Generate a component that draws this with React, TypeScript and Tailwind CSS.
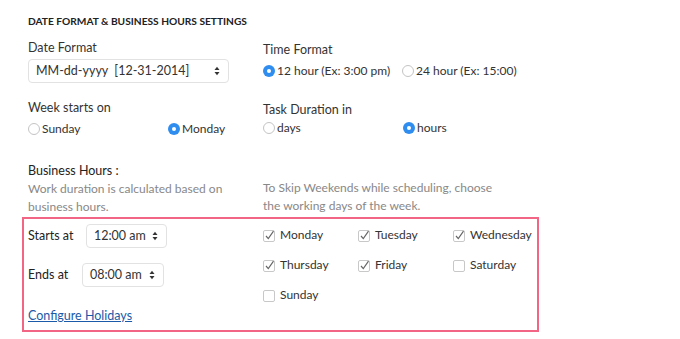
import React from "react";

const font = { fontFamily: "Lato, 'Open Sans', sans-serif" };

function Radio({ checked }: { checked?: boolean }) {
  return checked ? (
    <span className="inline-flex items-center justify-center w-[12px] h-[12px] rounded-full bg-[#2f8df0] shrink-0">
      <span className="w-[4px] h-[4px] rounded-full bg-white" />
    </span>
  ) : (
    <span className="inline-block w-[12px] h-[12px] rounded-full border border-[#c4c4c4] bg-white shrink-0" />
  );
}

function Check({ checked }: { checked?: boolean }) {
  return (
    <svg width="13" height="13" viewBox="0 0 13 13" className="shrink-0">
      <rect x="0.5" y="1.5" width="11" height="11" rx="1.5" fill="#fff" stroke="#c8c8c8" />
      {checked && <path d="M3 7 L5.3 9.6 L10.5 2.2" fill="none" stroke="#666" strokeWidth="1.2" />}
    </svg>
  );
}

function Arrows() {
  return (
    <svg width="6" height="10" viewBox="0 0 6 10" className="shrink-0">
      <path d="M0.5 4 L3 0.8 L5.5 4 Z" fill="#333" />
      <path d="M0.5 6 L3 9.2 L5.5 6 Z" fill="#333" />
    </svg>
  );
}

function Select({ text, w, className }: { text: string; w: string; className?: string }) {
  return (
    <div className={`flex items-center justify-between h-[24px] rounded-[4px] border border-[#e2e2e2] bg-white pl-[7px] pr-[8px] text-[12.5px] text-[#333] shrink-0 ${w} ${className ?? ""}`}>
      <span className="whitespace-pre">{text}</span>
      <Arrows />
    </div>
  );
}

function RadioOpt({ checked, label, w }: { checked?: boolean; label: string; w?: string }) {
  return (
    <div className={`flex items-center gap-[2px] h-[18px] ${w ?? ""}`}>
      <Radio checked={checked} />
      <span className="text-[12px] text-[#333]">{label}</span>
    </div>
  );
}

function Day({ checked, label }: { checked?: boolean; label: string }) {
  return (
    <div className="flex items-center gap-[4px] h-[18px]">
      <Check checked={checked} />
      <span className="text-[12px] text-[#333]">{label}</span>
    </div>
  );
}

export default function App() {
  return (
    <div className="w-[680px] h-[339px] bg-white overflow-hidden" style={font}>
      <div className="pl-[28px] pt-[14px]">
        <div className="text-[10.2px] font-bold text-[#222] leading-[14px]">
          DATE FORMAT &amp; BUSINESS HOURS SETTINGS
        </div>
      </div>
      <div className="flex pl-[28px]">
        <div className="w-[235px] shrink-0 flex flex-col">
          <div className="mt-[11px] text-[12.5px] leading-[18px] text-[#333]">Date Format</div>
          <Select text="MM-dd-yyyy  [12-31-2014]" w="w-[201px]" className="mt-[2px]" />
          <div className="mt-[16px] text-[12.5px] leading-[18px] text-[#333]">Week starts on</div>
          <div className="mt-[3px] flex">
            <RadioOpt label="Sunday" w="w-[140px]" />
            <RadioOpt checked label="Monday" />
          </div>
          <div className="mt-[24px] text-[12.5px] leading-[18px] text-[#222]">Business Hours :</div>
          <div className="text-[12px] leading-[18px] text-[#888]">
            Work duration is calculated based on
            <br />
            business hours.
          </div>
        </div>
        <div className="flex flex-col">
          <div className="mt-[13px] text-[12.5px] leading-[18px] text-[#333]">Time Format</div>
          <div className="mt-[3px] flex">
            <RadioOpt checked label="12 hour (Ex: 3:00 pm)" w="w-[139px]" />
            <RadioOpt label="24 hour (Ex: 15:00)" />
          </div>
          <div className="mt-[21px] text-[12.5px] leading-[18px] text-[#333]">Task Duration in</div>
          <div className="flex">
            <RadioOpt label="days" w="w-[140px]" />
            <RadioOpt checked label="hours" />
          </div>
          <div className="mt-[42px] text-[12px] leading-[18px] text-[#888]">
            To Skip Weekends while scheduling, choose
            <br />
            the working days of the week.
          </div>
        </div>
      </div>
      <div className="ml-[22px] mt-[1px] w-[517px] h-[115px] border-2 border-[#f26585] flex">
        <div className="w-[239px] shrink-0 pl-[4px] pt-[5px] flex flex-col">
          <div className="flex items-center">
            <span className="w-[58px] shrink-0 text-[12.5px] text-[#222]">Starts at</span>
            <Select text="12:00 am" w="w-[81px]" />
          </div>
          <div className="flex items-center mt-[15px]">
            <span className="w-[54px] shrink-0 text-[12.5px] text-[#222]">Ends at</span>
            <Select text="08:00 am" w="w-[82px]" />
          </div>
          <a className="mt-[20px] text-[12.5px] leading-[18px] text-[#1b5aa8] underline">Configure Holidays</a>
        </div>
        <div className="pt-[7px] grid grid-cols-[95px_95px_auto] gap-y-[12px] content-start">
          <Day checked label="Monday" />
          <Day checked label="Tuesday" />
          <Day checked label="Wednesday" />
          <Day checked label="Thursday" />
          <Day checked label="Friday" />
          <Day label="Saturday" />
          <Day label="Sunday" />
        </div>
      </div>
    </div>
  );
}
